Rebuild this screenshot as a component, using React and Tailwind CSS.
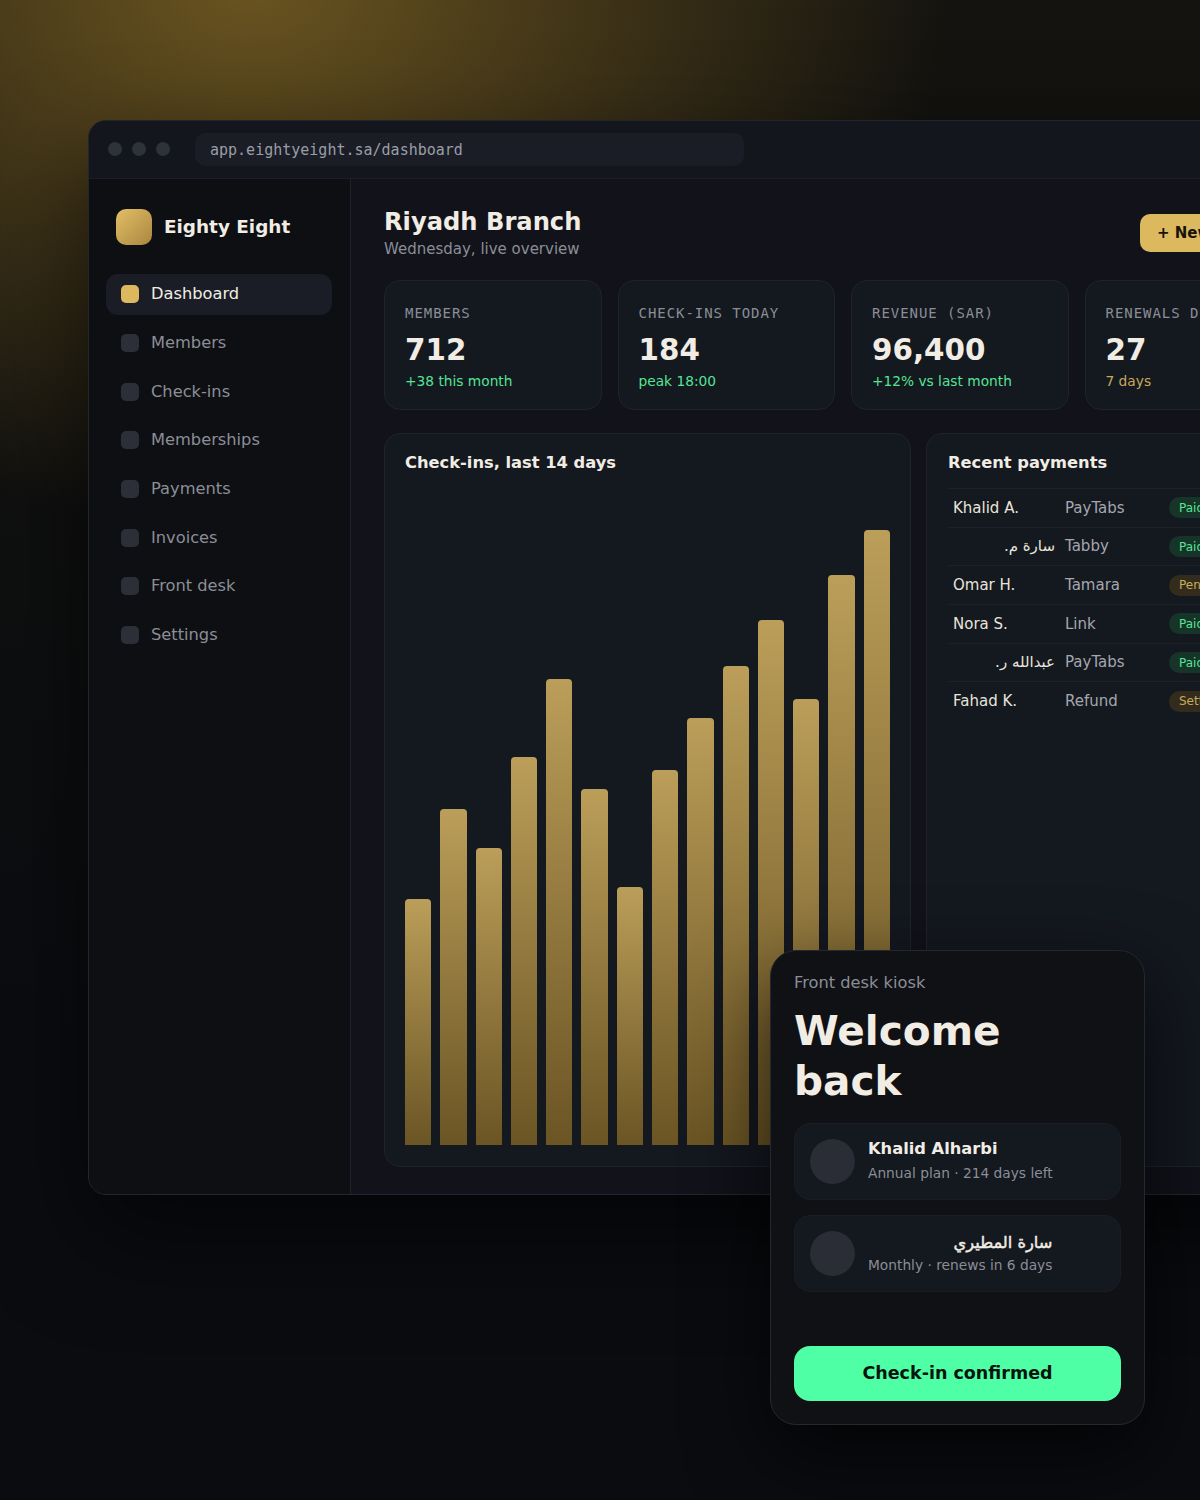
import React from 'react';

const nav = ['Dashboard', 'Members', 'Check-ins', 'Memberships', 'Payments', 'Invoices', 'Front desk', 'Settings'];

const stats = [
  { label: 'MEMBERS', value: '712', note: '+38 this month', tone: 'text-[#55e595]' },
  { label: 'CHECK-INS TODAY', value: '184', note: 'peak 18:00', tone: 'text-[#55e595]' },
  { label: 'REVENUE (SAR)', value: '96,400', note: '+12% vs last month', tone: 'text-[#55e595]' },
  { label: 'RENEWALS DUE', value: '27', note: '7 days', tone: 'text-[#c9a95c]' },
];

const bars = [40, 54.7, 48.3, 63.1, 75.8, 57.9, 42, 61, 69.4, 77.9, 85.4, 72.5, 92.7, 100];

const payments = [
  { name: 'Khalid A.', method: 'PayTabs', status: 'Paid' },
  { name: 'سارة م.', method: 'Tabby', status: 'Paid', rtl: true },
  { name: 'Omar H.', method: 'Tamara', status: 'Pending' },
  { name: 'Nora S.', method: 'Link', status: 'Paid' },
  { name: 'عبدالله ر.', method: 'PayTabs', status: 'Paid', rtl: true },
  { name: 'Fahad K.', method: 'Refund', status: 'Settled' },
];

export default function App() {
  return (
    <div className="relative w-[1200px] h-[1500px] overflow-hidden bg-[linear-gradient(180deg,#14130f,#0a0c10_70%)] font-['DejaVu_Sans',sans-serif] text-[#f1ede4]">
      <div className="absolute inset-0 bg-[radial-gradient(700px_550px_at_250px_-20px,#6a5420,transparent)]" />

      {/* Browser window */}
      <div className="absolute left-[88px] top-[120px] w-[1248px] h-[1075px] flex flex-col rounded-[18px] border border-[#23262e] bg-[#11121a] overflow-hidden shadow-[0_40px_100px_rgba(0,0,0,0.6)]">
        <div className="h-[58px] shrink-0 flex items-center gap-[10px] pl-[19px] pr-5 pb-px bg-[#14161d] border-b border-[#1c1f27]">
          <span className="w-[14px] h-[14px] rounded-full bg-[#2e323b]" />
          <span className="w-[14px] h-[14px] rounded-full bg-[#2e323b]" />
          <span className="w-[14px] h-[14px] rounded-full bg-[#2e323b]" />
          <div className="ml-[15px] w-[549px] h-[33px] flex items-center px-[15px] pt-[2px] rounded-[10px] bg-[#1a1d26] font-['DejaVu_Sans_Mono',monospace] text-[15px] text-[#9a9da6]">
            app.eightyeight.sa/dashboard
          </div>
        </div>

        <div className="flex-1 flex min-h-0">
          {/* Sidebar */}
          <aside className="w-[262px] shrink-0 bg-[#0d0f13] border-r border-[#1f222a] pl-[17px] pr-[18px] pt-[30px]">
            <div className="flex items-center gap-[12px] px-[10px] mb-[29px]">
              <div className="w-[36px] h-[36px] rounded-[10px] bg-gradient-to-br from-[#e3bf66] to-[#a9873f]" />
              <span className="font-bold text-[18.4px] leading-[34px] text-[#f1ede4]">Eighty Eight</span>
            </div>
            <nav className="flex flex-col gap-[8px]">
              {nav.map((item, i) => (
                <div
                  key={item}
                  className={`h-[40.7px] flex items-center gap-[12px] px-[15px] rounded-[12px] text-[16.25px] ${
                    i === 0 ? 'bg-[#1a1d26] text-[#f1ede4]' : 'text-[#8b8e97]'
                  }`}
                >
                  <span className={`w-[18px] h-[18px] rounded-[5px] ${i === 0 ? 'bg-[#dcb85f]' : 'bg-[#2c2f38]'}`} />
                  {item}
                </div>
              ))}
            </nav>
          </aside>

          {/* Main */}
          <main className="flex-1 min-w-0 px-[33px] pt-[27px] pb-[27px] flex flex-col">
            <div className="flex items-center justify-between mb-[20px]">
              <div>
                <h1 className="font-bold text-[24.2px] leading-[32px] text-[#f1ede4]">Riyadh Branch</h1>
                <p className="text-[15px] leading-[22px] text-[#8b8e97]">Wednesday, live overview</p>
              </div>
              <button className="h-[38px] w-[162px] text-left px-[17px] rounded-[10px] bg-[#dcb85f] font-bold text-[15px] text-[#17130a] whitespace-nowrap">+ New member</button>
            </div>

            <div className="grid grid-cols-4 gap-[16px] mb-[23px]">
              {stats.map((s) => (
                <div key={s.label} className="h-[130px] rounded-[16px] border border-[#1f232c] bg-[#14181f] px-[20px] pt-[23px]">
                  <div className="font-['DejaVu_Sans_Mono',monospace] text-[14px] leading-[18px] tracking-[0.95px] text-[#8b8e97] whitespace-nowrap">{s.label}</div>
                  <div className="font-bold text-[29.4px] leading-[38px] mt-[9px] text-[#f1ede4]">{s.value}</div>
                  <div className={`text-[13.75px] leading-[18px] mt-[3px] ${s.tone}`}>{s.note}</div>
                </div>
              ))}
            </div>

            <div className="flex-1 min-h-0 grid grid-cols-[527px_1fr] gap-[15px]">
              <div className="rounded-[16px] border border-[#1f232c] bg-[#14181f] px-[20px] pt-[19px] pb-[21px] flex flex-col">
                <h2 className="font-bold text-[16.3px] leading-[20px] text-[#f1ede4]">Check-ins, last 14 days</h2>
                <div className="flex-1 flex items-end gap-[9px] mt-[20px]">
                  {bars.map((h, i) => (
                    <div
                      key={i}
                      className="flex-1 rounded-t-[4px] bg-gradient-to-b from-[#bb9e59] to-[#6b5524]"
                      style={{ height: `${(h / 100) * 615}px` }}
                    />
                  ))}
                </div>
              </div>

              <div className="rounded-[16px] border border-[#1f232c] bg-[#14181f] px-[21px] pt-[19px]">
                <h2 className="font-bold text-[16.3px] leading-[20px] text-[#f1ede4] mb-[15px]">Recent payments</h2>
                {payments.map((p) => (
                  <div key={p.method + p.name} className="h-[38.7px] flex items-center border-t border-[#1d2028] px-[5px] text-[15px]">
                    <div dir={p.rtl ? 'rtl' : 'ltr'} className="w-[102px] text-[#e8e4da]">{p.name}</div>
                    <div className="ml-[10px] w-[104px] text-[#a5a7ae]">{p.method}</div>
                    <span
                      className={`px-[10px] h-[21px] flex items-center rounded-full text-[12px] ${
                        p.status === 'Paid' ? 'bg-[#173429] text-[#55e595]' : 'bg-[#332c1c] text-[#c9a95c]'
                      }`}
                    >
                      {p.status}
                    </span>
                  </div>
                ))}
              </div>
            </div>
          </main>
        </div>
      </div>

      {/* Kiosk card */}
      <div className="absolute left-[770px] top-[950px] w-[375px] h-[475px] flex flex-col rounded-[26px] border border-[#25282f] bg-[#0f1115] p-[23px] shadow-[0_30px_80px_rgba(0,0,0,0.7)]">
        <p className="text-[16.25px] leading-[20px] -mt-px text-[#8b8e97]">Front desk kiosk</p>
        <h2 className="font-bold text-[40.6px] leading-[50px] mt-[13px] text-[#f1ede4]">Welcome back</h2>
        <div className="flex flex-col gap-[15px] mt-[17px]">
          {[
            { name: 'Khalid Alharbi', sub: 'Annual plan · 214 days left' },
            { name: 'سارة المطيري', sub: 'Monthly · renews in 6 days', rtl: true },
          ].map((m) => (
            <div key={m.sub} className="h-[77px] flex items-center gap-[13px] px-[15px] rounded-[16px] border border-[#1a1d25] bg-[#14181f]">
              <div className="w-[45px] h-[45px] rounded-full bg-[#2a2d36]" />
              <div>
                <div dir={m.rtl ? 'rtl' : 'ltr'} className={`text-[16.25px] leading-[23px] text-[#f1ede4] ${m.rtl ? 'font-normal translate-y-[2px] [-webkit-text-stroke:0.45px_#f1ede4]' : 'font-bold'}`}>{m.name}</div>
                <div className="text-[13.75px] leading-[27px] text-[#8b8e97]">{m.sub}</div>
              </div>
            </div>
          ))}
        </div>
        <button className="mt-auto h-[55px] rounded-[16px] bg-[#4fffa5] font-bold text-[17.5px] text-[#06140d]">Check-in confirmed</button>
      </div>
    </div>
  );
}
